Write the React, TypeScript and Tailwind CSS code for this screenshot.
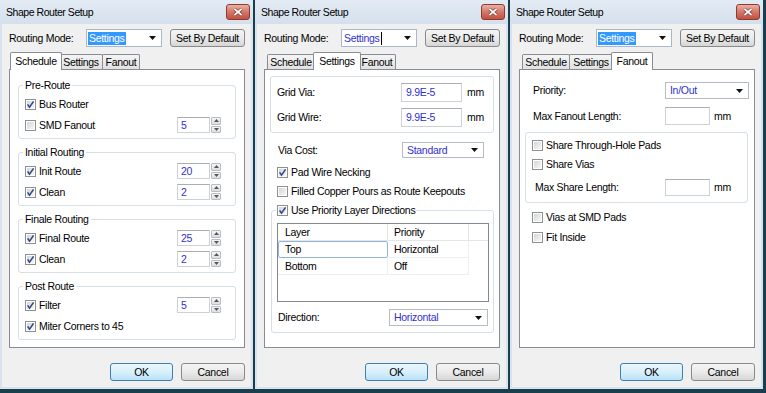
import type { ReactNode } from "react";

const VAL = "text-[#3030d0]";

const TABS = [
  { label: "Schedule", w: "w-[48px]", sel: "w-[52px]" },
  { label: "Settings", w: "w-[44px]", sel: "w-[48px]" },
  { label: "Fanout", w: "w-[38px]", sel: "w-[42px]" },
];

function CheckBox({ on = false }: { on?: boolean }) {
  return (
    <span className="relative flex h-[11px] w-[11px] shrink-0 border border-[#8e8f8f] bg-white p-px">
      <span className="h-full w-full bg-gradient-to-br from-[#d3d6da] to-[#f6f7f8]" />
      {on && (
        <svg viewBox="0 0 11 11" className="absolute -left-px -top-px h-[11px] w-[11px]">
          <path d="M2.6 5.4 4.5 8.1 8.6 2.4" fill="none" stroke="#34468c" strokeWidth="1.6" />
        </svg>
      )}
    </span>
  );
}

function CheckRow({ on, label, className = "" }: { on?: boolean; label: string; className?: string }) {
  return (
    <div className={`flex h-[16px] items-center gap-[3px] ${className}`}>
      <CheckBox on={on} />
      <span>{label}</span>
    </div>
  );
}

function SpinBtn({ up }: { up?: boolean }) {
  return (
    <span className="flex flex-1 items-center justify-center rounded-[1px] border border-[#b9bdc3] bg-gradient-to-b from-[#f6f6f6] to-[#dedede]">
      <svg viewBox="0 0 5 3" className="h-[3px] w-[5px]">
        <path d={up ? "M0 3h5L2.5 0z" : "M0 0h5L2.5 3z"} fill="#555" />
      </svg>
    </span>
  );
}

function Spin({ value }: { value: string }) {
  return (
    <div className="flex h-[16px] gap-px">
      <div className={`flex w-[33px] items-center border border-[#cdd2d9] border-t-[#abadb3] bg-white pl-[3px] ${VAL}`}>
        {value}
      </div>
      <div className="flex w-[10px] flex-col gap-px">
        <SpinBtn up />
        <SpinBtn />
      </div>
    </div>
  );
}

function TextBox({ className, value = "" }: { className: string; value?: string }) {
  return (
    <div className={`flex items-center border border-[#cdd2d9] border-t-[#abadb3] bg-white pl-[4px] ${VAL} ${className}`}>
      {value}
    </div>
  );
}

function Arrow() {
  return (
    <svg viewBox="0 0 7 4" className="mr-[5px] h-[4px] w-[7px] shrink-0">
      <path d="M0 0h7L3.5 4z" fill="#111" />
    </svg>
  );
}

function Combo({ className, children }: { className: string; children: ReactNode }) {
  return (
    <div className={`flex items-center justify-between border border-[#b5bcc6] bg-white pl-[4px] ${className}`}>
      <span className={VAL}>{children}</span>
      <Arrow />
    </div>
  );
}

function Button({ label, w, def = false }: { label: string; w: string; def?: boolean }) {
  return (
    <div
      className={`flex h-[18px] items-center justify-center rounded-[3px] border ${w} ${
        def
          ? "border-[#3c7fb1] bg-gradient-to-b from-[#eaf6fd] via-[#d9f0fc] to-[#b9e2f7]"
          : "border-[#8a8a8a] bg-gradient-to-b from-[#f4f4f4] via-[#ebebeb] to-[#d6d6d6]"
      }`}
    >
      {label}
    </div>
  );
}

function Group({ legend, children }: { legend: string; children: ReactNode }) {
  return (
    <fieldset className="mx-[8px] mb-[7px] rounded-[3px] border border-[#d5dfe5]">
      <legend className="ml-[4px] px-[2px] leading-[13px]">{legend}</legend>
      <div className="pb-[5px] pl-[6px] pr-[14px] pt-[4px]">{children}</div>
    </fieldset>
  );
}

function Row({ on, label, spin }: { on?: boolean; label: string; spin?: string }) {
  return (
    <div className="flex h-[16px] items-center justify-between">
      <CheckRow on={on} label={label} />
      {spin && <Spin value={spin} />}
    </div>
  );
}

function SchedulePage() {
  return (
    <div className="pt-[9px]">
      <Group legend="Pre-Route">
        <Row on label="Bus Router" />
        <div className="h-[5px]" />
        <Row label="SMD Fanout" spin="5" />
      </Group>
      <Group legend="Initial Routing">
        <Row on label="Init Route" spin="20" />
        <div className="h-[5px]" />
        <Row on label="Clean" spin="2" />
      </Group>
      <Group legend="Finale Routing">
        <Row on label="Final Route" spin="25" />
        <div className="h-[5px]" />
        <Row on label="Clean" spin="2" />
      </Group>
      <Group legend="Post Route">
        <Row on label="Filter" spin="5" />
        <div className="h-[5px]" />
        <Row on label="Miter Corners to 45" />
      </Group>
    </div>
  );
}

function SettingsPage() {
  return (
    <div>
      <div className="ml-[5px] mr-[5px] mt-[6px] rounded-[3px] border border-[#d5dfe5] pb-[5px] pl-[6px] pt-[6px]">
        <div className="flex h-[19px] items-center">
          <span className="w-[124px]">Grid Via:</span>
          <TextBox className="h-[19px] w-[61px]" value="9.9E-5" />
          <span className="ml-[5px]">mm</span>
        </div>
        <div className="mt-[6px] flex h-[19px] items-center">
          <span className="w-[124px]">Grid Wire:</span>
          <TextBox className="h-[19px] w-[61px]" value="9.9E-5" />
          <span className="ml-[5px]">mm</span>
        </div>
      </div>
      <div className="mt-[9px] flex h-[16px] items-center pl-[13px]">
        <span className="w-[124px]">Via Cost:</span>
        <Combo className="h-[16px] w-[82px]">Standard</Combo>
      </div>
      <CheckRow on label="Pad Wire Necking" className="mt-[6px] pl-[12px]" />
      <CheckRow label="Filled Copper Pours as Route Keepouts" className="mt-[3px] pl-[12px]" />
      <fieldset className="ml-[6px] mr-[5px] mt-[3px] rounded-[3px] border border-[#d5dfe5]">
        <legend className="ml-[4px] px-[1px]">
          <CheckRow on label="Use Priority Layer Directions" />
        </legend>
        <div className="pb-[6px] pl-[5px] pr-[4px] pt-[5px]">
          <div className="h-[79px] border border-[#828790] bg-white">
            <div className="flex h-[17px] border-b border-[#e5e5e5]">
              <div className="flex w-[110px] items-center border-r border-[#e5e5e5] pl-[7px]">Layer</div>
              <div className="flex w-[81px] items-center border-r border-[#e5e5e5] pl-[6px]">Priority</div>
            </div>
            <div className="flex h-[17px]">
              <div className="flex w-[110px] items-center rounded-[2px] border border-[#8fb4df] pl-[6px]">Top</div>
              <div className="flex w-[81px] items-center border-b border-r border-[#eeeeee] pl-[6px]">Horizontal</div>
            </div>
            <div className="flex h-[17px]">
              <div className="flex w-[110px] items-center border-b border-r border-[#eeeeee] pl-[7px]">Bottom</div>
              <div className="flex w-[81px] items-center border-b border-r border-[#eeeeee] pl-[6px]">Off</div>
            </div>
          </div>
          <div className="mt-[7px] flex h-[17px] items-center pl-[1px]">
            <span className="w-[111px]">Direction:</span>
            <Combo className="h-[17px] w-[99px]">Horizontal</Combo>
          </div>
        </div>
      </fieldset>
    </div>
  );
}

function FanoutPage() {
  return (
    <div>
      <div className="mt-[12px] flex h-[17px] items-center pl-[13px]">
        <span className="w-[132px]">Priority:</span>
        <Combo className="h-[17px] w-[84px]">In/Out</Combo>
      </div>
      <div className="mt-[8px] flex h-[18px] items-center pl-[13px]">
        <span className="w-[132px]">Max Fanout Length:</span>
        <TextBox className="h-[18px] w-[45px]" />
        <span className="ml-[4px]">mm</span>
      </div>
      <div className="ml-[5px] mr-[6px] mt-[7px] rounded-[3px] border border-[#d5dfe5] pb-[6px] pl-[6px] pt-[4px]">
        <CheckRow label="Share Through-Hole Pads" />
        <CheckRow label="Share Vias" className="mt-[3px]" />
        <div className="mt-[7px] flex h-[17px] items-center pl-[3px]">
          <span className="w-[130px]">Max Share Length:</span>
          <TextBox className="h-[17px] w-[45px]" />
          <span className="ml-[4px]">mm</span>
        </div>
      </div>
      <CheckRow label="Vias at SMD Pads" className="mt-[6px] pl-[12px]" />
      <CheckRow label="Fit Inside" className="mt-[4px] pl-[12px]" />
    </div>
  );
}

function Dialog({ tab, editing = false, children }: { tab: string; editing?: boolean; children: ReactNode }) {
  return (
    <div className="flex h-[389px] w-[253px] shrink-0 flex-col bg-[#d8e3ef]">
      <div className="flex h-[24px] shrink-0 items-center justify-between bg-gradient-to-b from-[#e3ebf4] to-[#d5e0ed] pl-[6px] pr-[3px]">
        <span className="text-[10.5px] tracking-[-0.45px]">Shape Router Setup</span>
        <span className="flex h-[16px] w-[24px] items-center justify-center rounded-[3px] border border-[#8d3a30] bg-gradient-to-b from-[#e9b1a5] via-[#d4766a] to-[#c2503f]">
          <svg viewBox="0 0 10 8" className="h-[8px] w-[10px]">
            <path d="M1.5 1 8.5 7M8.5 1 1.5 7" stroke="#7a2a20" strokeWidth="3" />
            <path d="M1.5 1 8.5 7M8.5 1 1.5 7" stroke="#fff" strokeWidth="1.7" />
          </svg>
        </span>
      </div>
      <div className="mx-[2px] mb-[2px] flex flex-1 flex-col bg-[#f0f0f0] pl-[7px] pr-[6px] pt-[5px]">
        <div className="flex h-[18px] items-center">
          <span className="w-[77px]">Routing Mode:</span>
          <div className="flex h-[18px] w-[76px] items-center justify-between border border-[#a9b8ca] bg-white pl-px">
            {editing ? (
              <span className="flex items-center pl-px">
                <span className={VAL}>Settings</span>
                <span className="ml-px h-[13px] w-px bg-black" />
              </span>
            ) : (
              <span className="bg-[#3399ff] px-px text-white">Settings</span>
            )}
            <Arrow />
          </div>
          <div className="ml-[8px]">
            <Button label="Set By Default" w="w-[75px]" />
          </div>
        </div>
        <div className="mt-[5px] flex h-[17px] items-end pl-[3px]">
          {TABS.map((t, i) =>
            t.label === tab ? (
              <div
                key={t.label}
                className={`relative z-10 -mb-px flex h-[18px] items-start justify-center rounded-t-[2px] border border-b-0 border-[#898c95] bg-white pt-[2px] ${t.sel} ${
                  i === 0 ? "-ml-[2px] -mr-[2px]" : "-mx-[2px]"
                }`}
              >
                {t.label}
              </div>
            ) : (
              <div
                key={t.label}
                className={`flex h-[15px] items-center justify-center rounded-t-[2px] border border-b-0 border-[#898c95] bg-gradient-to-b from-[#f5f5f5] to-[#e1e1e1] ${t.w} ${
                  i === 0 ? "" : "-ml-px"
                }`}
              >
                {t.label}
              </div>
            )
          )}
        </div>
        <div className="h-[279px] border border-[#898c95] bg-white">{children}</div>
        <div className="mt-[15px] flex justify-end gap-[8px]">
          <Button label="OK" w="w-[63px]" def />
          <Button label="Cancel" w="w-[64px]" />
        </div>
      </div>
    </div>
  );
}

export default function App() {
  return (
    <div className="flex h-[393px] w-[766px] gap-[2px] overflow-hidden bg-[#173f4d] font-['Liberation_Sans',Arial,sans-serif] text-[10.5px] leading-[13px] tracking-[-0.3px] text-black">
      <Dialog tab="Schedule">
        <SchedulePage />
      </Dialog>
      <Dialog tab="Settings" editing>
        <SettingsPage />
      </Dialog>
      <Dialog tab="Fanout">
        <FanoutPage />
      </Dialog>
    </div>
  );
}
